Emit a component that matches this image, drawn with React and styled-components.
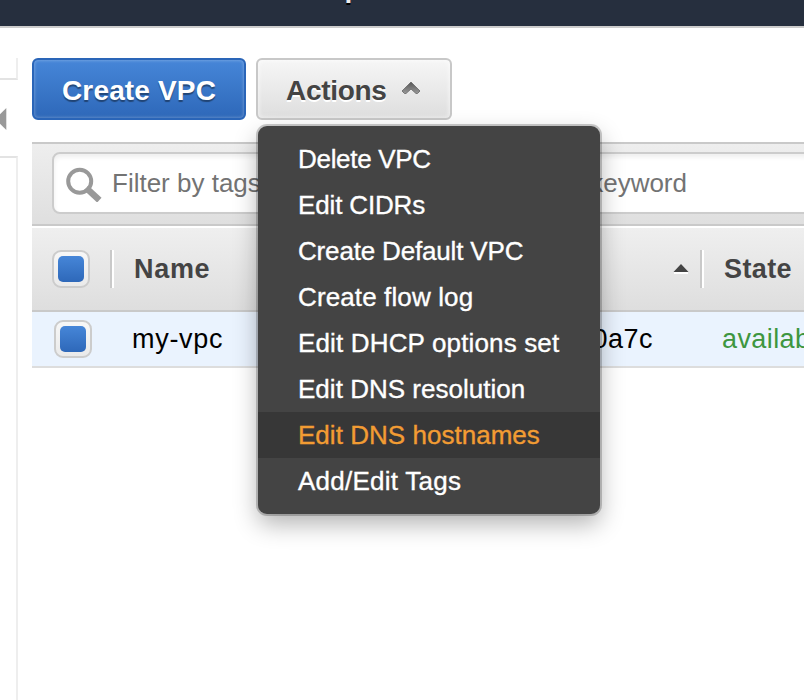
import React from "react";
import styled, { createGlobalStyle } from "styled-components";

const GlobalStyle = createGlobalStyle`
  * { box-sizing: border-box; }
  html, body { margin: 0; background: #fff; }
  body {
    overflow: hidden;
    font-family: "Liberation Sans", Arial, Helvetica, sans-serif;
    font-size: 26px;
    line-height: 30px;
    color: #000;
    white-space: nowrap;
  }
`;

const Page = styled.div`
  width: 804px;
  height: 700px;
  overflow: hidden;
  display: flex;
  flex-direction: column;
`;

const NavBar = styled.header`
  flex: none;
  height: 28px;
  background: #262f3e;
  border-bottom: 2px solid #ccc;
  display: flex;
  align-items: flex-start;
  gap: 112px;
  overflow: hidden;
`;

const NavLink = styled.span`
  font-size: 28px;
  font-weight: bold;
  color: #eee;
  text-shadow: 0 2px 0 #000;
  margin-left: ${(p) => p.$offset || "0"};
  margin-top: -27px;
`;

const Body = styled.div`
  flex: 1;
  display: flex;
  min-height: 0;
`;

const Sidebar = styled.aside`
  width: 18px;
  flex: none;
  display: flex;
  flex-direction: column;
  padding-top: 30px;
`;

const SidebarTop = styled.div`
  height: 22px;
  border-right: 2px solid #eee;
  border-bottom: 2px solid #e3e3e3;
`;

const CollapseHandle = styled.button`
  height: 76px;
  width: 16px;
  padding: 2px 0 0;
  border: 0;
  background: transparent;
  display: flex;
  align-items: center;
`;

const SidebarRest = styled.div`
  flex: 1;
  border-right: 2px solid #eee;
  border-top: 2px solid #e3e3e3;
`;

const Main = styled.main`
  flex: none;
  width: 772px;
  margin-left: 14px;
  padding-top: 30px;
`;

const Toolbar = styled.div`
  display: flex;
  gap: 10px;
`;

const Button = styled.button`
  width: ${(p) => p.$width}px;
  height: 62px;
  padding: 3px 0 0 28px;
  display: flex;
  align-items: center;
  border-radius: 6px;
  font: bold 28px/30px "Liberation Sans", Arial, sans-serif;
  letter-spacing: ${(p) => p.$spacing};
`;

const PrimaryButton = styled(Button)`
  color: #fff;
  border: 2px solid #2a65b8;
  background: linear-gradient(#4686d8, #2e68b9);
  text-shadow: 0 2px 1px rgba(0, 0, 0, 0.4);
  box-shadow: inset 0 0 3px 1px rgba(255, 255, 255, 0.22);
`;

const SecondaryButton = styled(Button)`
  color: #444;
  border: 2px solid #c8c8c8;
  background: linear-gradient(#f6f6f6, #dedede);
  text-shadow: 0 2px 0 #fff;
  box-shadow: inset 0 0 4px 1px rgba(255, 255, 255, 0.6);

  svg { margin: -5px 0 0 14px; }
`;

const MenuAnchor = styled.div`
  position: relative;
`;

const Menu = styled.ul`
  position: absolute;
  z-index: 2;
  top: 68px;
  left: 2px;
  width: 342px;
  margin: 0;
  padding: 10px 0;
  list-style: none;
  background: #444;
  border-radius: 9px;
  box-shadow: 0 0 0 2px rgba(0, 0, 0, 0.2), 0 10px 24px rgba(0, 0, 0, 0.3);
`;

const MenuItem = styled.li`
  height: 46px;
  padding: 0 0 0 40px;
  line-height: 46px;
  color: ${(p) => (p.$active ? "#f29c33" : "#fff")};
  background: ${(p) => (p.$active ? "#373737" : "transparent")};
  letter-spacing: ${(p) => p.$spacing};
  -webkit-text-stroke: 0.35px currentColor;
`;

const FilterBar = styled.div`
  margin-top: 22px;
  height: 84px;
  padding: 8px 0 0 20px;
  border-top: 2px solid #c9c9c9;
  border-bottom: 2px solid #c9c9c9;
  background: linear-gradient(#eee, #dfdfdf);
`;

const SearchField = styled.div`
  height: 62px;
  width: 760px;
  display: flex;
  align-items: center;
  padding-left: 10px;
  gap: 10px;
  background: #fff;
  border: 2px solid #ccc;
  border-radius: 8px;
  box-shadow: inset 0 3px 5px rgba(0, 0, 0, 0.07);
`;

const Placeholder = styled.span`
  display: flex;
  width: 575px;
  justify-content: space-between;
  color: #737373;
`;

const TableHeader = styled.div`
  display: flex;
  align-items: center;
  height: 86px;
  border-top: 2px solid #fff;
  border-bottom: 2px solid #c9c9c9;
  background: linear-gradient(#efefef, #dedede);
  font-weight: bold;
  font-size: 27px;
  color: #444;
`;

const TableRow = styled.div`
  display: flex;
  align-items: center;
  height: 56px;
  border-bottom: 2px solid #ddd;
  background: #eaf3fe;
  font-size: 27px;
`;

const Cell = styled.div`
  flex: none;
  width: ${(p) => p.$width}px;
  padding-left: ${(p) => p.$indent || 0}px;
  padding-right: ${(p) => p.$trail || 0}px;
  display: flex;
  align-items: center;
  justify-content: ${(p) => (p.$end ? "flex-end" : "flex-start")};
  color: ${(p) => (p.$good ? "#3d9640" : "inherit")};
  letter-spacing: ${(p) => p.$spacing || "0"};
`;

const Divider = styled.div`
  width: 4px;
  height: 38px;
  flex: none;
  border-left: 2px solid #c9c9c9;
  border-right: 2px solid #fff;
`;

const Checkbox = styled.span`
  width: 38px;
  height: 38px;
  padding: 4px;
  border: 2px solid #ccc;
  border-radius: 9px;
  background: linear-gradient(#f7f7f7, #eaeaea);

  &::after {
    content: "";
    display: block;
    height: 26px;
    border-radius: 5px;
    background: linear-gradient(#4686d8, #2e68b9);
  }
`;

const SearchIcon = () => (
  <svg width="38" height="38" viewBox="0 0 38 38" fill="none">
    <circle cx="15.7" cy="17.2" r="11.5" stroke="#999" strokeWidth="4" />
    <path d="M24.5 26L33 34" stroke="#999" strokeWidth="6.4" strokeLinecap="square" strokeLinejoin="round" />
  </svg>
);

const ChevronIcon = () => (
  <svg width="20" height="14" viewBox="0 0 20 14">
    <defs>
      <linearGradient id="chev" x1="0" y1="0" x2="0" y2="1">
        <stop stopColor="#555" />
        <stop offset="1" stopColor="#999" />
      </linearGradient>
    </defs>
    <path
      d="M10 1L19 10L16.5 12.5H15L10 8L5 12.5H3.5L1 10Z"
      fill="url(#chev)"
      stroke="#666"
      strokeWidth="0.8"
      strokeLinejoin="round"
    />
  </svg>
);

const SortIcon = () => (
  <svg width="16" height="12" viewBox="0 0 16 12">
    <path d="M1 9H15V11H1Z" fill="#fff" />
    <path d="M8 1L15.5 9H.5Z" fill="#444" />
  </svg>
);

const HandleIcon = () => (
  <svg width="7" height="22" viewBox="0 0 7 22">
    <path d="M6.3 0V22L-5 11Z" fill="#999" />
  </svg>
);

const actions = [
  ["Delete VPC", "-0.3px"],
  ["Edit CIDRs", "-0.15px"],
  ["Create Default VPC", "-0.17px"],
  ["Create flow log", "0.12px"],
  ["Edit DHCP options set", "0.15px"],
  ["Edit DNS resolution", "0.02px"],
  ["Edit DNS hostnames", "0.03px"],
  ["Add/Edit Tags", "0.25px"],
];

export default function App() {
  return (
    <>
      <GlobalStyle />
      <Page>
        <NavBar>
          <NavLink $offset="-85px">Services</NavLink>
          <NavLink>Resource Groups</NavLink>
        </NavBar>
        <Body>
          <Sidebar>
            <SidebarTop />
            <CollapseHandle aria-label="Collapse"><HandleIcon /></CollapseHandle>
            <SidebarRest />
          </Sidebar>
          <Main>
            <Toolbar>
              <PrimaryButton $width={214} $spacing="0.15px">Create VPC</PrimaryButton>
              <MenuAnchor>
                <SecondaryButton $width={196} $spacing="-0.3px">
                  Actions
                  <ChevronIcon />
                </SecondaryButton>
                <Menu>
                  {actions.map(([label, spacing]) => (
                    <MenuItem key={label} $spacing={spacing} $active={label === "Edit DNS hostnames"}>
                      {label}
                    </MenuItem>
                  ))}
                </Menu>
              </MenuAnchor>
            </Toolbar>
            <FilterBar>
              <SearchField>
                <SearchIcon />
                <Placeholder>
                  <span>Filter by tags</span>
                  <span>keyword</span>
                </Placeholder>
              </SearchField>
            </FilterBar>
            <TableHeader>
              <Cell $width={78} $indent={20}><Checkbox /></Cell>
              <Divider />
              <Cell $width={200} $indent={20} $spacing="0.7px">Name</Cell>
              <Cell $width={386} $end $trail={11}><SortIcon /></Cell>
              <Divider />
              <Cell $width={120} $indent={20} $spacing="0.4px">State</Cell>
            </TableHeader>
            <TableRow>
              <Cell $width={78} $indent={22}><Checkbox /></Cell>
              <Cell $width={204} $indent={22} $spacing="0.7px">my-vpc</Cell>
              <Cell $width={339} $end $spacing="0.5px">0a7c</Cell>
              <Cell $width={180} $indent={69} $good $spacing="0.4px">available</Cell>
            </TableRow>
          </Main>
        </Body>
      </Page>
    </>
  );
}
